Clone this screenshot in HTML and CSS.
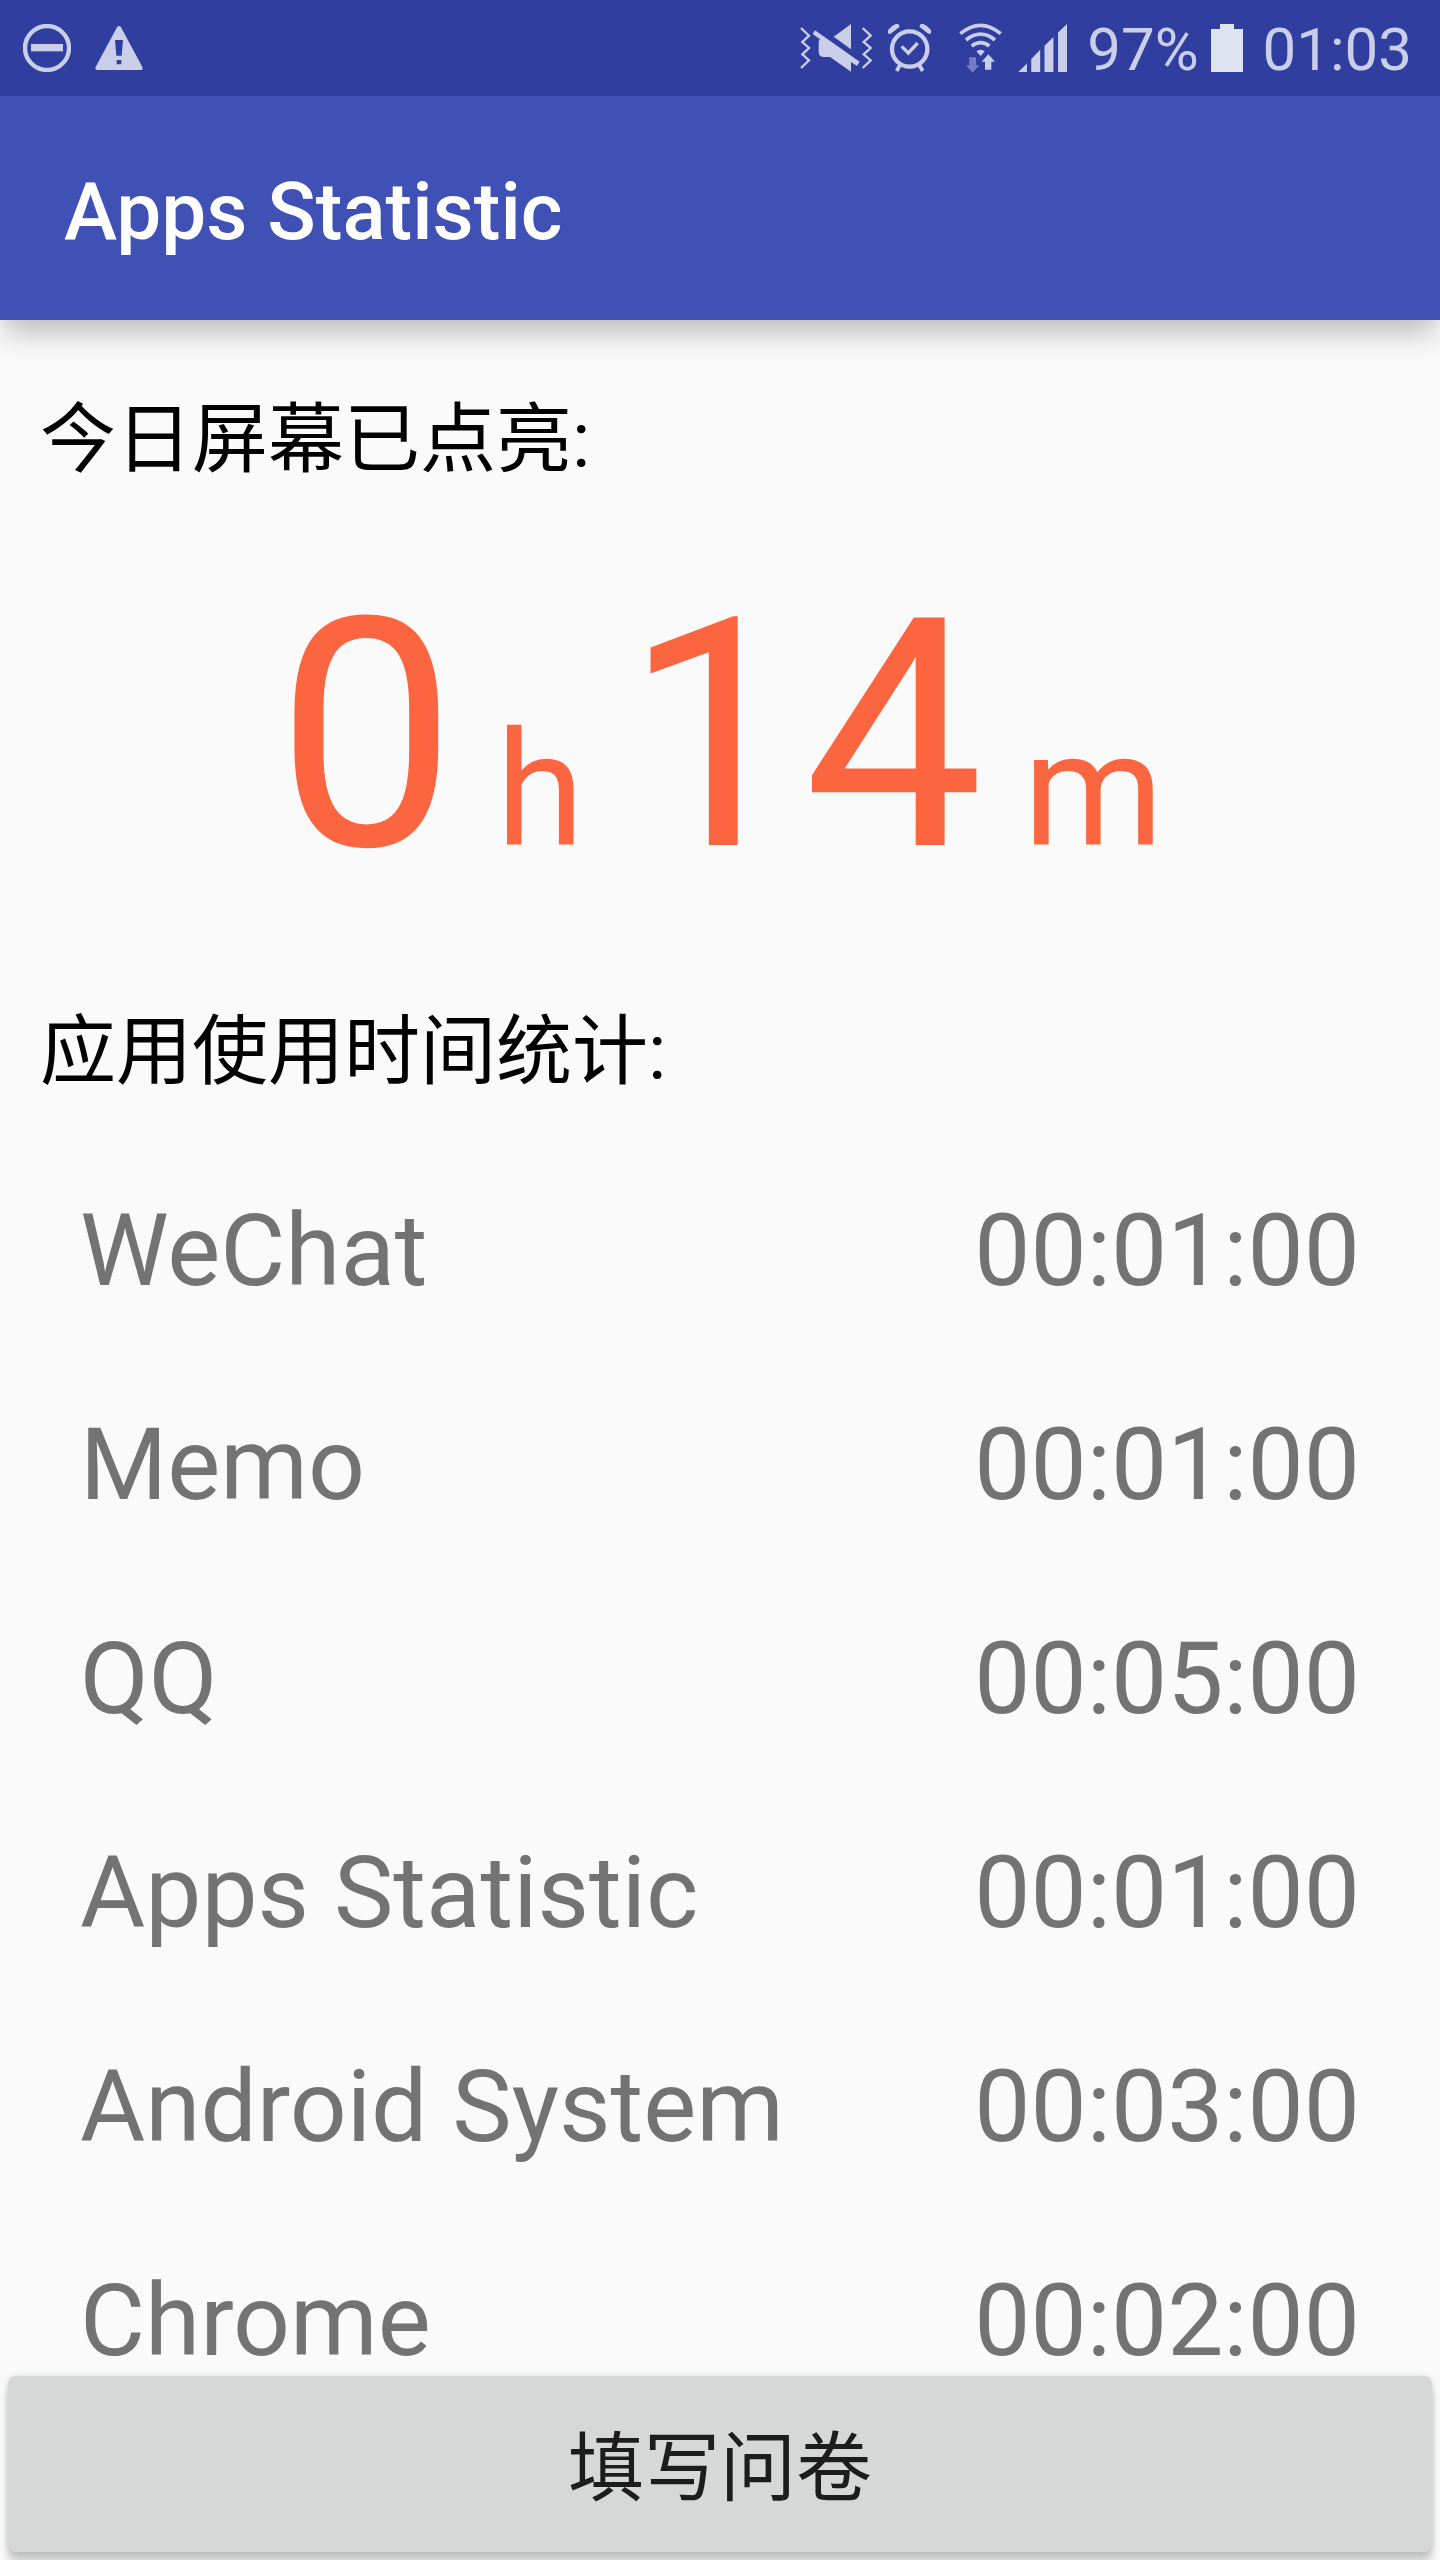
FILE: index.html
```html
<!DOCTYPE html>
<html lang="zh-CN">
<head>
<meta charset="utf-8">
<meta name="viewport" content="width=device-width, initial-scale=1">
<title>Apps Statistic</title>
<link rel="stylesheet" href="styles.css">
</head>
<body>
<div class="screen">
  <div class="status-bar">
    <div class="status-group status-notices">
      <svg class="icon" width="48" height="48" viewBox="0 0 144 144" aria-label="Do not disturb">
        <circle cx="72" cy="72" r="66" fill="none" stroke="currentColor" stroke-width="13"/>
        <rect x="24" y="60" width="96" height="22" fill="currentColor"/>
      </svg>
      <svg class="icon" width="48" height="48" viewBox="0 0 144 144" aria-label="Warning">
        <path fill="currentColor" fill-rule="evenodd" d="M66 10q6-8 12 0l64 119q3 9-5 9H7q-8 0-5-9zM60 48l4 47h16l4-47zM65 108v13h14v-13z"/>
      </svg>
    </div>
    <div class="status-group">
      <svg class="icon" width="72" height="48" viewBox="57 72 216 144" aria-label="Vibrate">
        <g fill="none" stroke="currentColor" stroke-width="7">
          <path d="M60 84l24 23-20 19 20 18-20 19 20 18-24 23"/>
          <path d="M245 84l24 23-21 19 21 18-21 19 21 18-24 23"/>
        </g>
        <path fill="currentColor" d="M210 72v76l-52-38zM102 91l134 94-8 13-18-12v29l-63-44h-20q-14-2-14-16v-31l4-6-22-16z"/>
      </svg>
      <svg class="icon icon-alarm" width="43" height="48" viewBox="321 72 129 144" aria-label="Alarm">
        <g fill="none" stroke="currentColor">
          <circle cx="386" cy="147" r="53" stroke-width="13"/>
          <path stroke-width="10" d="M362 139l20 20 28-30"/>
          <path stroke-width="11" d="M357 195l-10 18M415 195l10 18"/>
        </g>
        <path fill="currentColor" d="M321 101v-11q10-13 23-18h8l4 8-27 21zM450 101v-11q-10-13-23-18h-8l-4 8 27 21z"/>
      </svg>
      <svg class="icon icon-wifi" width="43" height="50" viewBox="534 68 129 150" aria-label="Wi-Fi">
        <g fill="none" stroke="currentColor" stroke-width="11">
          <path d="M538 100q61-50 121 0"/>
          <path d="M555 119q44-35 87 0"/>
          <path d="M572 137q27-20 53 0"/>
        </g>
        <path fill="currentColor" d="M586 153q13-9 25 0l-12 14zM622 162l20 22h-11v24h-19v-24h-10z"/>
        <path class="icon-dim" fill="currentColor" d="M565 171h20v24h10l-20 22-20-22h10z"/>
      </svg>
      <svg class="icon icon-signal" width="49" height="48" viewBox="710 71 148 145" aria-label="Signal">
        <path fill="currentColor" d="M711 216l26-26v26zM750 216v-39l27-28v67zM790 216v-79l27-27v106zM831 216V97l27-26v145z"/>
      </svg>
      <span class="status-text">97%</span>
      <svg class="icon icon-battery" width="32" height="48" viewBox="0 0 32 48" aria-label="Battery">
        <path fill="currentColor" d="M9 0h14v5h9v43H0V5h9z"/>
      </svg>
      <time class="status-text status-clock">01:03</time>
    </div>
  </div>

  <header class="app-bar">
    <h1 class="app-title">Apps Statistic</h1>
  </header>

  <main class="content">
    <h2 class="section-title">今日屏幕已点亮:</h2>
    <p class="total"><span>0</span><span class="unit"> h </span><span>14</span><span class="unit"> m</span></p>
    <h2 class="section-title" id="usage">应用使用时间统计:</h2>
    <div class="usage-area">
      <table class="usage-list" aria-labelledby="usage">
        <tbody>
          <tr><th scope="row">WeChat</th><td>00:01:00</td></tr>
          <tr><th scope="row">Memo</th><td>00:01:00</td></tr>
          <tr><th scope="row">QQ</th><td>00:05:00</td></tr>
          <tr><th scope="row">Apps Statistic</th><td>00:01:00</td></tr>
          <tr><th scope="row">Android System</th><td>00:03:00</td></tr>
          <tr><th scope="row">Chrome</th><td>00:02:00</td></tr>
        </tbody>
      </table>
    </div>
  </main>

  <footer class="actions">
    <button class="survey-button" type="button">填写问卷</button>
  </footer>
</div>
</body>
</html>
```

FILE: styles.css
```css
* {
  box-sizing: border-box;
}

body {
  margin: 0;
  background: #fafafa;
  color: #000;
  font-family: Roboto, "Noto Sans CJK SC", sans-serif;
}

.screen {
  display: flex;
  flex-direction: column;
  height: 100vh;
  overflow: hidden;
}

/* Status bar */
.status-bar {
  display: flex;
  flex: none;
  justify-content: space-between;
  height: 96px;
  padding: 0 28px 0 23px;
  background: #303f9f;
  color: #cacee8;
}

.status-group {
  display: flex;
  align-items: center;
}

.status-notices {
  gap: 24px;
}

.icon {
  display: block;
  flex: none;
}

.icon-alarm,
.icon-signal {
  margin-left: 16px;
}

.icon-wifi {
  margin-left: 28px;
}

.icon-dim {
  opacity: 0.45;
}

.icon-battery {
  margin-left: 12px;
  color: #dfe2f1;
}

.status-text {
  margin-left: 20px;
  padding-top: 4px;
  font-size: 60px;
  line-height: 92px;
  white-space: nowrap;
}

/* App bar */
.app-bar {
  position: relative;
  display: flex;
  flex: none;
  align-items: center;
  height: 224px;
  padding: 8px 64px 0;
  background: #3f51b5;
  box-shadow: 0 16px 28px -4px rgba(0, 0, 0, 0.26);
  color: #fff;
}

.app-title {
  margin: 0;
  font-size: 80px;
  font-weight: 500;
  line-height: 96px;
}

/* Content */
.content {
  display: flex;
  flex: 1;
  flex-direction: column;
  min-height: 0;
  padding-top: 64px;
}

.section-title {
  flex: none;
  margin: 0;
  padding: 0 40px;
  font-size: 76px;
  font-weight: 400;
  line-height: 112px;
}

.total {
  flex: none;
  margin: 0;
  padding: 40px 0 60px;
  color: #fb6640;
  font-size: 320px;
  line-height: 400px;
  text-align: center;
  white-space: pre;
}

.unit {
  font-size: 160px;
  line-height: 1;
}

/* The list runs on beneath the bottom button */
.usage-area {
  flex: 1;
  min-height: 0;
  margin-top: 36px;
}

.usage-list {
  width: 100%;
  border-collapse: collapse;
  color: #737373;
  font-size: 100px;
  line-height: 114px;
}

.usage-list th,
.usage-list td {
  padding: 50px 80px;
  font-weight: 400;
  text-align: left;
}

.usage-list td {
  text-align: right;
}

/* Bottom action */
.actions {
  flex: none;
  padding: 0 8px 8px;
}

.survey-button {
  position: relative;
  display: block;
  width: 100%;
  height: 176px;
  padding: 0 0 4px;
  border: 0;
  border-radius: 8px;
  background: #d6d8d7;
  box-shadow: 0 10px 8px rgba(0, 0, 0, 0.2), 0 0 6px rgba(0, 0, 0, 0.12);
  color: #1d1d1d;
  font: inherit;
  font-size: 76px;
}
```
